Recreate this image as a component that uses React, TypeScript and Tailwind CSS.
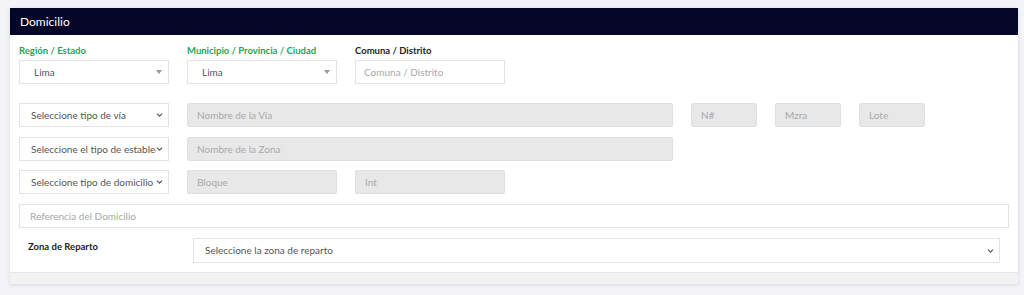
import React from 'react';

const font = { fontFamily: '"Lato", "Noto Sans", sans-serif' };

// small triangle caret, like the select2 widgets
const Caret = () => (
  <svg className="pointer-events-none absolute right-[6px] top-1/2 -translate-y-1/2" width="6" height="4" viewBox="0 0 6 4">
    <path d="M0 0h6L3 4z" fill="#999" />
  </svg>
);

// native looking chevron
const Chevron = () => (
  <svg className="pointer-events-none absolute right-[5px] top-1/2 -translate-y-1/2" width="7" height="5" viewBox="0 0 7 5">
    <path d="M1 1.2l2.5 2.5 2.5-2.5" stroke="#555" strokeWidth="1.2" fill="none" />
  </svg>
);

const Select2 = ({ value }: { value: string }) => (
  <div className="relative w-[150px] h-[24px] border border-[#e3e3e3] bg-white flex items-center pl-[14px] text-[10px] text-[#555]">
    {value}
    <Caret />
  </div>
);

const NativeSelect = ({ text, width = 'w-[150px]' }: { text: string; width?: string }) => (
  <div className={`relative ${width} h-[24px] border border-[#e3e3e3] bg-white flex items-center pl-[11px] pr-[12px] text-[10px] text-[#555]`}>
    <span className="block overflow-hidden whitespace-nowrap">{text}</span>
    <Chevron />
  </div>
);

const Disabled = ({ text, width }: { text: string; width: string }) => (
  <input
    disabled
    placeholder={text}
    className={`${width} h-[24px] rounded-[2px] border border-[#e0e0e0] bg-[#e8e8e8] px-[9px] text-[10px] placeholder:text-[#a8a8a8] outline-none`}
    style={font}
  />
);

export default function App() {
  return (
    <div className="min-h-[295px] w-full bg-[#f3f3f8] pt-[8px] pl-[10px]" style={font}>
      <div className="w-[1008px] bg-white shadow-[0_1px_4px_rgba(0,0,0,0.12)]">
        <div className="h-[27px] bg-[#050527] flex items-center pl-[10px] text-[12px] text-white">Domicilio</div>

        <div className="px-[9px] pt-[9px]">
          <div className="flex gap-[18px]">
            <div className="flex flex-col">
              <span className="h-[16px] text-[9.5px] font-bold text-[#22a653]">Región / Estado</span>
              <Select2 value="Lima" />
            </div>
            <div className="flex flex-col">
              <span className="h-[16px] text-[9.5px] font-bold text-[#22a653]">Municipio / Provincia / Ciudad</span>
              <Select2 value="Lima" />
            </div>
            <div className="flex flex-col">
              <span className="h-[16px] text-[9.5px] font-bold text-[#222]">Comuna / Distrito</span>
              <input
                placeholder="Comuna / Distrito"
                className="w-[150px] h-[24px] border border-[#e3e3e3] bg-white px-[8px] text-[10px] placeholder:text-[#a8a8a8] outline-none"
                style={font}
              />
            </div>
          </div>

          <div className="mt-[19px] flex gap-[18px]">
            <NativeSelect text="Seleccione tipo de vía" />
            <Disabled text="Nombre de la Vía" width="w-[486px]" />
            <Disabled text="N#" width="w-[66px]" />
            <Disabled text="Mzra" width="w-[66px]" />
            <Disabled text="Lote" width="w-[66px]" />
          </div>

          <div className="mt-[10px] flex gap-[18px]">
            <NativeSelect text="Seleccione el tipo de establecimiento" />
            <Disabled text="Nombre de la Zona" width="w-[486px]" />
          </div>

          <div className="mt-[9px] flex gap-[18px]">
            <NativeSelect text="Seleccione tipo de domicilio" />
            <Disabled text="Bloque" width="w-[150px]" />
            <Disabled text="Int" width="w-[150px]" />
          </div>

          <input
            placeholder="Referencia del Domicilio"
            className="mt-[10px] block w-[990px] h-[24px] border border-[#e3e3e3] bg-white px-[10px] text-[10px] placeholder:text-[#a8a8a8] outline-none"
            style={font}
          />

          <div className="mt-[10px] flex items-start">
            <span className="w-[174px] pl-[9px] pt-[2px] text-[9.5px] font-bold text-[#222]">Zona de Reparto</span>
            <NativeSelect text="Seleccione la zona de reparto" width="w-[807px] h-[25px]" />
          </div>
        </div>

        <div className="mt-[9px] h-[12px] border-t border-[#e6e6e6] bg-[#f2f2f2]" />
      </div>
    </div>
  );
}
